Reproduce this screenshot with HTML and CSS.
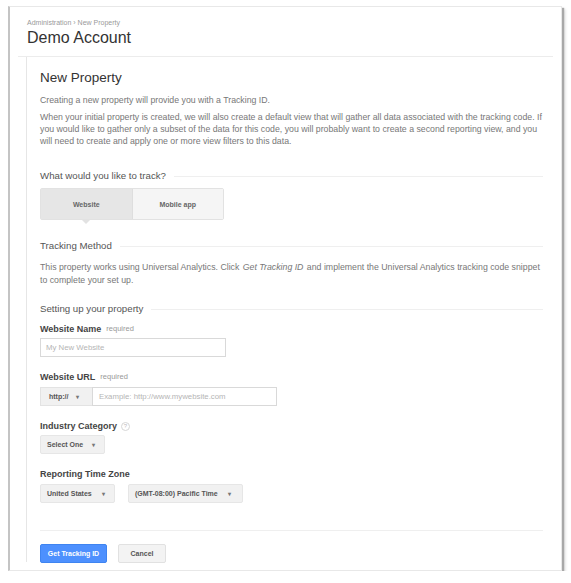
FILE: index.html
```html
<!DOCTYPE html>
<html>
<head>
<meta charset="utf-8">
<link rel="stylesheet" href="styles.css">
</head>
<body>
<div class="frame">
  <div class="header">
    <div class="crumb">Administration &rsaquo; New Property</div>
    <div class="account">Demo Account</div>
  </div>
  <div class="sep"></div>
  <div class="panel">
    <h1 class="title">New Property</h1>
    <p class="intro">Creating a new property will provide you with a Tracking ID.</p>
    <p class="para">When your initial property is created, we will also create a default view that will gather all data associated with the tracking code. If you would like to gather only a subset of the data for this code, you will probably want to create a second reporting view, and you will need to create and apply one or more view filters to this data.</p>

    <div class="section s-track"><span>What would you like to track?</span><i class="rule"></i></div>
    <div class="tabs">
      <div class="tab active">Website</div>
      <div class="tab">Mobile app</div>
    </div>

    <div class="section s-method"><span>Tracking Method</span><i class="rule"></i></div>
    <p class="method">This property works using Universal Analytics. Click <em>Get Tracking ID</em> and implement the Universal Analytics tracking code snippet to complete your set up.</p>

    <div class="section s-setup"><span>Setting up your property</span><i class="rule"></i></div>

    <div class="label l-first">Website Name <span class="req">required</span></div>
    <div class="input name-input">My New Website</div>

    <div class="label">Website URL <span class="req">required</span></div>
    <div class="urlgroup">
      <div class="proto">http:// <span class="caret">&#9662;</span></div>
      <div class="input url-input">Example: http://www.mywebsite.com</div>
    </div>

    <div class="label">Industry Category <span class="help">?</span></div>
    <div class="row">
      <div class="select one">Select One <span class="caret">&#9662;</span></div>
    </div>

    <div class="label">Reporting Time Zone</div>
    <div class="row tz">
      <div class="select country">United States <span class="caret">&#9662;</span></div>
      <div class="select zone">(GMT-08:00) Pacific Time <span class="caret">&#9662;</span></div>
    </div>

    <div class="footer-rule"></div>
    <div class="buttons">
      <div class="btn primary">Get Tracking ID</div>
      <div class="btn cancel">Cancel</div>
    </div>
  </div>
</div>
</body>
</html>
```

FILE: styles.css
```css
* { box-sizing: border-box; }
html, body { margin: 0; padding: 0; background: #ffffff; }
body {
  font-family: "Liberation Sans", Arial, sans-serif;
  color: #666;
  padding: 6px 0 0 8px;
}
.frame {
  width: 554px;
  height: 565px;
  background: #fff;
  border: 1px solid #e8e8e8;
  border-left: 2px solid #c4c4c4;
  box-shadow: 2px 2px 1px #a8a8a8, 3px 3px 3px #d4d4d4;
}
.header { padding: 11px 0 0 17px; }
.crumb { font-size: 7px; line-height: 10px; color: #9a9a9a; }
.account { font-size: 16px; line-height: 20px; color: #333; }
.sep {
  margin: 8px 8px 0 8px;
  border-top: 1px solid #ececec;
}
.panel {
  margin-left: 16px;
  width: 530px;
  height: 505px;
  border-left: 1px solid #e6e6e6;
  padding: 12px 0 0 13px;
}
.title { margin: 0; font-size: 13.5px; line-height: 18px; font-weight: normal; color: #333; }
.intro { margin: 7px 0 0; font-size: 8.75px; line-height: 12px; color: #777; }
.para { margin: 5px 0 0; width: 505px; font-size: 8.75px; line-height: 12px; color: #777; }
.section {
  display: flex;
  align-items: center;
  width: 503px;
  font-size: 9.7px;
  line-height: 14px;
  color: #555;
}
.section .rule { flex: 1; border-top: 1px solid #efefef; margin-left: 8px; }
.s-track { margin-top: 22px; }
.s-method { margin-top: 19px; }
.s-setup { margin-top: 15px; }
.tabs {
  margin-top: 5px;
  display: flex;
  width: 184px;
  height: 32px;
  border: 1px solid #e2e2e2;
  border-radius: 2px;
}
.tab {
  flex: 1;
  display: flex;
  align-items: center;
  justify-content: center;
  font-size: 7px;
  font-weight: bold;
  color: #666;
  background: #f5f5f5;
  position: relative;
}
.tab.active { background: #e6e6e6; border-right: 1px solid #dedede; }
.tab.active::after {
  content: "";
  position: absolute;
  left: 50%;
  bottom: -5px;
  margin-left: -4px;
  border-left: 4px solid transparent;
  border-right: 4px solid transparent;
  border-top: 4px solid #e2e2e2;
}
.method { margin: 8px 0 0; width: 505px; font-size: 8.75px; line-height: 13px; color: #777; }
.method em { padding: 0 1px; }
.label {
  margin-top: 14px;
  font-size: 9px;
  line-height: 12px;
  font-weight: bold;
  color: #444;
  display: flex;
  align-items: center;
}
.label.l-first { margin-top: 7px; }
.req { font-size: 7.5px; font-weight: normal; color: #999; margin-left: 5px; }
.help {
  margin-left: 4px;
  width: 9px;
  height: 9px;
  border: 1px solid #d6d6d6;
  border-radius: 50%;
  font-size: 6px;
  line-height: 7px;
  text-align: center;
  font-weight: normal;
  color: #bbb;
}
.input {
  height: 19px;
  border: 1px solid #d9d9d9;
  font-size: 7.8px;
  color: #b5b5b5;
  display: flex;
  align-items: center;
  padding-left: 5px;
  background: #fff;
}
.name-input { margin-top: 3px; width: 186px; }
.urlgroup { margin-top: 4px; display: flex; height: 19px; }
.proto {
  width: 52px;
  background: #f1f1f1;
  border: 1px solid #e3e3e3;
  border-right: none;
  font-size: 7px;
  font-weight: bold;
  color: #555;
  display: flex;
  align-items: center;
  padding-left: 8px;
}
.url-input { width: 185px; height: 19px; padding-left: 6px; }
.caret { font-size: 6px; color: #777; margin-left: 8px; }
.row { margin-top: 3px; display: flex; gap: 13px; }
.row.tz { margin-top: 4px; }
.select {
  height: 19px;
  background: #f1f1f1;
  border: 1px solid #e6e6e6;
  border-radius: 2px;
  font-size: 7px;
  font-weight: bold;
  color: #555;
  display: flex;
  align-items: center;
  padding: 0 6px;
}
.one { width: 65px; }
.one .caret { margin-left: 9px; }
.country { width: 75px; }
.zone { width: 115px; }
.zone .caret { margin-left: 10px; }
.country .caret { margin-left: 10px; }
.footer-rule { margin-top: 27px; width: 503px; border-top: 1px solid #efefef; }
.buttons { margin-top: 13px; display: flex; gap: 11px; }
.btn {
  height: 19px;
  border-radius: 2px;
  font-size: 7px;
  font-weight: bold;
  display: flex;
  align-items: center;
  justify-content: center;
}
.primary { width: 67px; background: #4d90fe; border: 1px solid #3f84f0; color: #fff; }
.cancel { width: 48px; background: #f3f3f3; border: 1px solid #e1e1e1; color: #555; }
```
